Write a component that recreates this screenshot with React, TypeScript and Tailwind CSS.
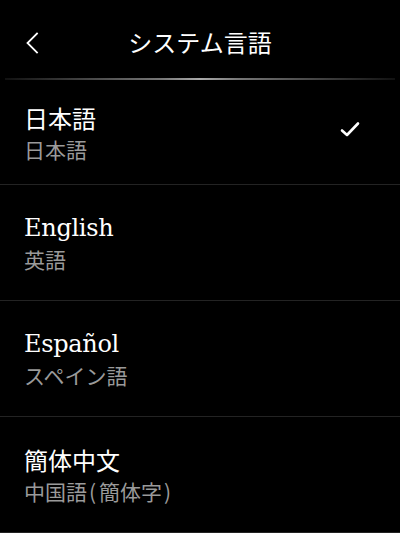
import { FC, ReactNode } from 'react';

interface LanguageItem {
  name: string;
  label: ReactNode;
  latin?: boolean;
  selected?: boolean;
}

const languages: LanguageItem[] = [
  { name: '日本語', label: '日本語', selected: true },
  { name: 'English', label: '英語', latin: true },
  { name: 'Español', label: 'スペイン語', latin: true },
  {
    name: '簡体中文',
    label: (
      <>
        中国語<span className="ml-[2px] mr-[3px]">(</span>簡体字<span className="ml-[2px]">)</span>
      </>
    ),
  },
];

const jp = "font-['Noto_Sans_CJK_JP',sans-serif]";

const Check: FC = () => (
  <svg width="20" height="16" viewBox="0 0 20 16" fill="none">
    <path d="M2 9.5 L7 14 L18 2.5" stroke="#fff" strokeWidth="2.6" strokeLinecap="round" strokeLinejoin="round" />
  </svg>
);

const Row: FC<{ item: LanguageItem; first?: boolean }> = ({ item, first }) => (
  <div
    className={`flex items-center justify-between px-6 border-b border-[#232323] ${first ? 'h-[105px]' : 'h-[116px]'}`}
  >
    <div className="flex flex-col">
      <div
        className={
          item.latin
            ? "text-[24px] leading-[32px] text-white font-['DejaVu_Serif',serif] tracking-[-0.3px]"
            : `text-[24px] leading-[32px] text-white ${jp}`
        }
      >
        {item.name}
      </div>
      <div className={`text-[21px] leading-[28px] mt-[1px] text-[#9a9a9a] ${jp}`}>{item.label}</div>
    </div>
    {item.selected && (
      <div className="mr-[16px] mt-[-6px]">
        <Check />
      </div>
    )}
  </div>
);

const App: FC = () => {
  return (
    <div className="w-[400px] h-[533px] bg-black overflow-hidden">
      <div className="relative h-[78px] flex items-center justify-center">
        <button className="absolute left-[24px] top-[31px] w-[16px] h-[24px] flex items-center justify-center">
          <svg width="14" height="22" viewBox="0 0 14 22" fill="none">
            <path d="M12 1.5 L2.5 11 L12 20.5" stroke="#fff" strokeWidth="1.8" strokeLinecap="square" />
          </svg>
        </button>
        <h1 className={`text-[24px] leading-[30px] text-white mt-[6px] ${jp}`}>システム言語</h1>
      </div>
      <div className="mx-[5px] h-[2px] bg-[linear-gradient(to_right,#111_0%,#777_40%,#aaa_50%,#777_60%,#111_100%)]" />
      {languages.map((item, i) => (
        <Row key={item.name} item={item} first={i === 0} />
      ))}
    </div>
  );
};

export default App;
